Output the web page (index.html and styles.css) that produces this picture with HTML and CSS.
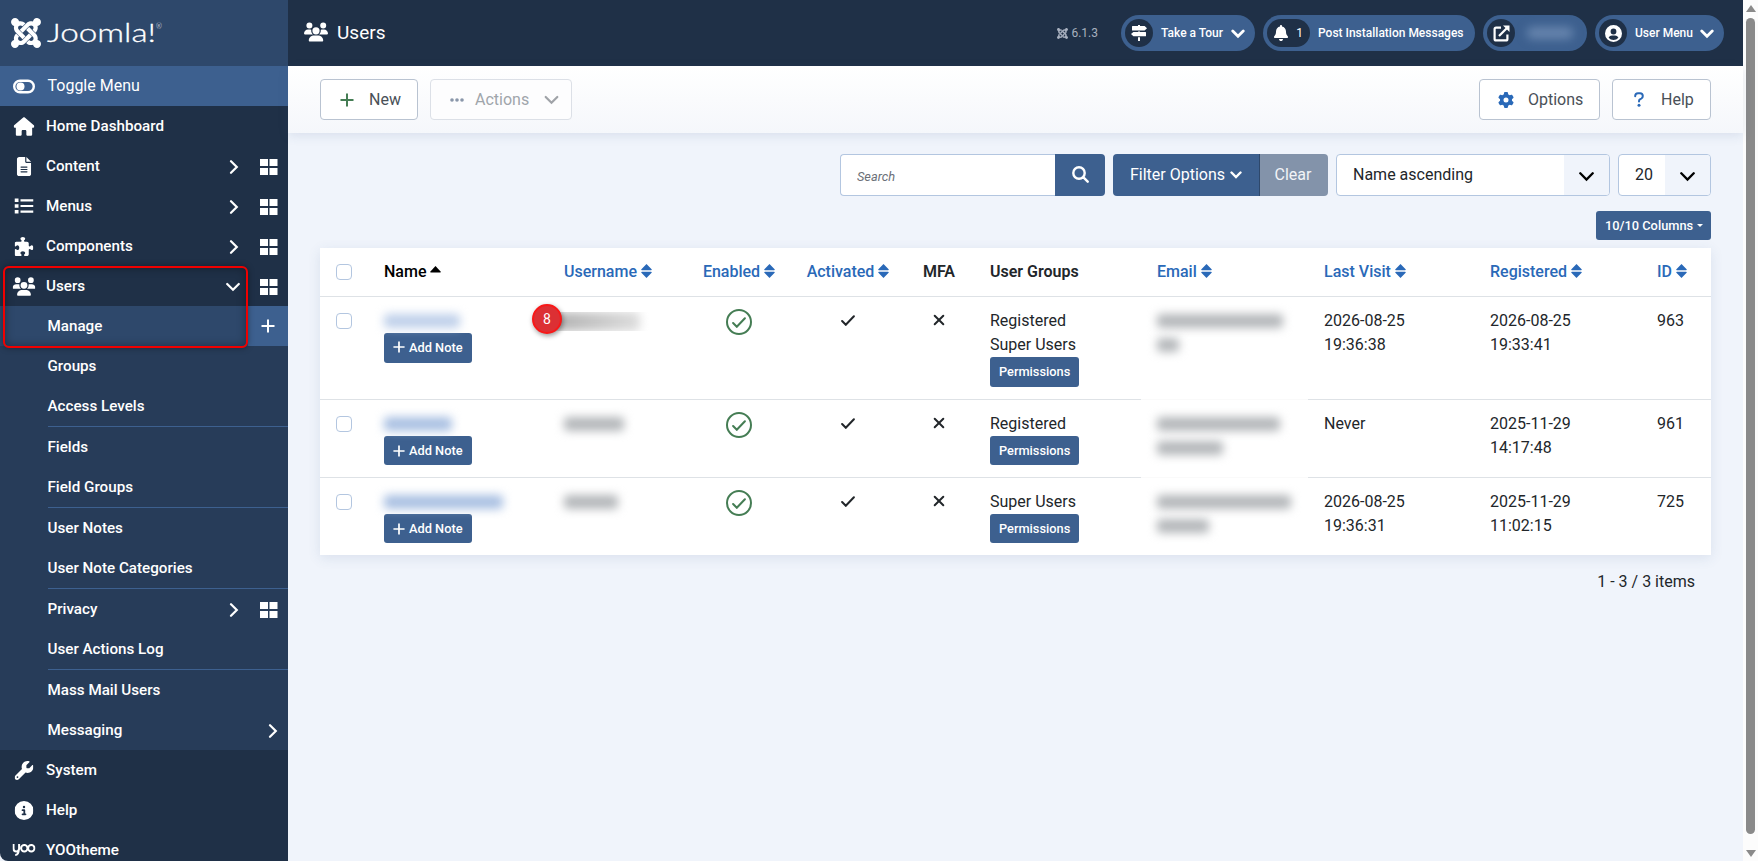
FILE: index.html
```html
<!DOCTYPE html>
<html lang="en">
<head>
  <meta charset="UTF-8">
  <title>Users</title>
  <link rel="stylesheet" href="styles.css">
</head>
<body>

  <!-- icons -->
  <svg width="0" height="0" class="sprite">
    <symbol id="joomla" viewBox="0 32 448 448"><path d="M.6 92.1C.6 58.8 27.4 32 60.4 32c30 0 54.5 21.9 59.2 50.2 32.6-7.6 67.1.6 96.5 30l-44.3 44.3c-20.5-20.5-42.6-16.3-55.4-3.5-14.3 14.3-14.3 37.9 0 52.2l99.5 99.5-44 44.3c-87.7-87.2-49.7-49.7-99.8-99.7-26.8-26.5-35-64.8-24.8-98.9C20.4 144.6.6 120.7.6 92.1zm129.5 116.4l44.3 44.3c10-10 89.7-89.7 99.7-99.8 14.3-14.3 37.6-14.3 51.9 0 12.8 12.8 17 35-3.5 55.4l44 44.3c31.2-31.2 38.5-67.6 28.9-101.2 29.2-4.1 51.9-29.2 51.9-59.5 0-33.2-26.8-60.1-59.8-60.1-30.3 0-55.4 22.5-59.5 51.6-33.8-9.9-71.7-1.5-98.3 25.1-18.3 19.1-71.1 71.5-99.6 99.9zm266.3 152.2c8.2-32.7-.9-68.5-26.3-93.9-11.8-12.2 5 4.7-99.5-99.7l-44.3 44.3 99.7 99.7c14.3 14.3 14.3 37.6 0 51.9-12.8 12.8-35 17-55.4-3.5l-44 44.3c27.6 30.2 68 38.8 102.7 28 5.5 27.4 29.7 48.1 58.9 48.1 33 0 59.8-26.8 59.8-60.1 0-30.2-22.5-55-51.6-59.1zm-84.3-53.1l-44-44.3c-87 86.4-50.4 50.4-99.7 99.8-14.3 14.3-37.6 14.3-51.9 0-13.1-13.4-16.9-35.3 3.2-55.4l-44-44.3c-30.2 30.2-38 65.2-29.5 98.3-26.7 6-46.2 29.9-46.2 58.2C0 453.2 26.8 480 59.8 480c28.6 0 52.5-19.8 58.6-46.7 32.7 8.2 68.5-.6 94.2-26 32.1-32 12.2-12.4 99.5-99.7z"/></symbol>
    <symbol id="home" viewBox="0 0 576 512"><path d="M575.8 255.5c0 18-15 32.1-32 32.1h-32l.7 160.2c0 2.7-.2 5.4-.5 8.1V472c0 22.1-17.9 40-40 40H392c-22.1 0-40-17.9-40-40v-88c0-17.7-14.3-32-32-32h-64c-17.7 0-32 14.3-32 32v88c0 22.1-17.9 40-40 40h-80c-22.1 0-40-17.9-40-40V287.6H32c-18 0-32-14-32-32.1 0-9 3-17 10-24L266.4 8c7-7 15-8 22-8s15 2 21 7l255.4 224.5c8 7 12 15 11 24z"/></symbol>
    <symbol id="file" viewBox="0 0 384 512"><path d="M64 0C28.7 0 0 28.7 0 64v384c0 35.3 28.7 64 64 64h256c35.3 0 64-28.7 64-64V160H256c-17.7 0-32-14.3-32-32V0H64zm192 0v128h128L256 0zM112 256h160c8.8 0 16 7.2 16 16s-7.2 16-16 16H112c-8.8 0-16-7.2-16-16s7.2-16 16-16zm0 64h160c8.8 0 16 7.2 16 16s-7.2 16-16 16H112c-8.8 0-16-7.2-16-16s7.2-16 16-16zm0 64h160c8.8 0 16 7.2 16 16s-7.2 16-16 16H112c-8.8 0-16-7.2-16-16s7.2-16 16-16z"/></symbol>
    <symbol id="list" viewBox="0 0 19 16"><path d="M0 .5h4v3.6H0zM0 6.2h4v3.6H0zM0 11.9h4v3.6H0zM6 1.2h13v2.2H6zM6 6.9h13v2.2H6zM6 12.6h13v2.2H6z"/></symbol>
    <symbol id="puzzle" viewBox="0 0 512 512"><path d="M192 104.8c0-9.2-5.8-17.3-13.2-22.8C167.2 73.3 160 61.3 160 48c0-26.5 28.7-48 64-48s64 21.5 64 48c0 13.3-7.2 25.3-18.8 34c-7.4 5.5-13.2 13.6-13.2 22.8c0 12.8 10.4 23.2 23.2 23.2H336c26.5 0 48 21.5 48 48v56.8c0 12.8 10.4 23.2 23.2 23.2c9.2 0 17.3-5.8 22.8-13.2c8.7-11.6 20.7-18.8 34-18.8c26.5 0 48 28.7 48 64s-21.5 64-48 64c-13.3 0-25.3-7.2-34-18.8c-5.5-7.4-13.6-13.2-22.8-13.2c-12.8 0-23.2 10.4-23.2 23.2V464c0 26.5-21.5 48-48 48H279.2c-12.8 0-23.2-10.4-23.2-23.2c0-9.2 5.8-17.3 13.2-22.8c11.6-8.7 18.8-20.7 18.8-34c0-26.5-28.7-48-64-48s-64 21.5-64 48c0 13.3 7.2 25.3 18.8 34c7.4 5.5 13.2 13.6 13.2 22.8c0 12.8-10.4 23.2-23.2 23.2H48c-26.5 0-48-21.5-48-48V343.2C0 330.4 10.4 320 23.2 320c9.2 0 17.3 5.8 22.8 13.2C54.7 344.8 66.7 352 80 352c26.5 0 48-28.7 48-64s-21.5-64-48-64c-13.3 0-25.3 7.2-34 18.8C40.5 250.2 32.4 256 23.2 256C10.4 256 0 245.6 0 232.8V176c0-26.5 21.5-48 48-48H168.8c12.8 0 23.2-10.4 23.2-23.2z"/></symbol>
    <symbol id="users" viewBox="0 0 640 512"><path d="M144 0a80 80 0 1 1 0 160A80 80 0 1 1 144 0zM512 0a80 80 0 1 1 0 160A80 80 0 1 1 512 0zM0 298.7C0 239.8 47.8 192 106.7 192h42.7c15.9 0 31 3.5 44.6 9.7c-1.3 7.2-1.9 14.7-1.9 22.3c0 38.2 16.8 72.5 43.3 96H21.3C9.6 320 0 310.4 0 298.7zM405.3 320h-.7c26.6-23.5 43.3-57.8 43.3-96c0-7.6-.7-15-1.9-22.3c13.6-6.3 28.7-9.7 44.6-9.7h42.7C592.2 192 640 239.8 640 298.7c0 11.8-9.6 21.3-21.3 21.3H405.3zM224 224a96 96 0 1 1 192 0 96 96 0 1 1-192 0zM128 485.3C128 411.7 187.7 352 261.3 352h117.4C452.3 352 512 411.7 512 485.3c0 14.7-11.9 26.7-26.7 26.7H154.7c-14.7 0-26.7-11.9-26.7-26.7z"/></symbol>
    <symbol id="wrench" viewBox="0 0 512 512"><path d="M352 320c88.4 0 160-71.6 160-160c0-15.3-2.2-30.1-6.2-44.2c-3.1-10.8-16.4-13.2-24.3-5.3l-76.8 76.8c-3 3-7.1 4.7-11.3 4.7H336c-8.8 0-16-7.2-16-16V118.6c0-4.2 1.7-8.3 4.7-11.3l76.8-76.8c7.9-7.9 5.4-21.2-5.3-24.3C382.1 2.2 367.3 0 352 0C263.6 0 192 71.6 192 160c0 19.1 3.4 37.5 9.5 54.5L19.9 396.1C7.2 408.8 0 426.1 0 444.1C0 481.6 30.4 512 67.9 512c18 0 35.3-7.2 48-19.9L297.5 310.5c17 6.2 35.4 9.5 54.5 9.5zM80 408a24 24 0 1 1 0 48 24 24 0 1 1 0-48z"/></symbol>
    <symbol id="info" viewBox="0 0 512 512"><path fill-rule="evenodd" d="M256 512A256 256 0 1 0 256 0a256 256 0 1 0 0 512zM216 336h24v-64h-24c-13.3 0-24-10.7-24-24s10.7-24 24-24h48c13.3 0 24 10.7 24 24v88h8c13.3 0 24 10.7 24 24s-10.7 24-24 24h-80c-13.3 0-24-10.7-24-24s10.7-24 24-24zm40-208a32 32 0 1 1 0 64 32 32 0 1 1 0-64z"/></symbol>
    <symbol id="yoo" viewBox="0 0 23 12"><path fill="none" stroke="currentColor" stroke-width="2" d="M1 0v4.5q0 3 2.8 3t2.8-3V0M6.3 5q0 6-3.6 6M15 4.3a3.2 3.2 0 1 0-6.4 0a3.2 3.2 0 1 0 6.4 0M22 4.3a3.2 3.2 0 1 0-6.4 0a3.2 3.2 0 1 0 6.4 0"/></symbol>
    <symbol id="toggle" viewBox="0 0 22 14"><rect x="1.2" y="1.2" width="19.6" height="11.6" rx="5.8" fill="none" stroke="currentColor" stroke-width="2.4"/><circle cx="7.5" cy="7" r="4"/></symbol>
    <symbol id="grid" viewBox="0 0 18 16"><path d="M0 0h8v7H0zM9.500 0h8v7h-8zM0 9h8v7H0zM9.500 9h8v7h-8z"/></symbol>
    <symbol id="right" viewBox="0 0 10 14"><path fill="none" stroke="currentColor" stroke-width="2.2" stroke-linecap="round" d="M2 1.2l5.8 5.8L2 12.8"/></symbol>
    <symbol id="down" viewBox="0 0 14 10"><path fill="none" stroke="currentColor" stroke-width="2.2" stroke-linecap="round" d="M1.2 2L7 7.8 12.8 2"/></symbol>
    <symbol id="bold-down" viewBox="0 0 12 8"><path fill="none" stroke="currentColor" stroke-width="2.4" stroke-linecap="round" d="M1.5 1.500L6 6l4.500-4.500"/></symbol>
    <symbol id="plus" viewBox="0 0 14 14"><path d="M6 .5h2V6h5.5v2H8v5.5H6V8H.5V6H6z"/></symbol>
    <symbol id="signs" viewBox="0 0 16 16"><path d="M7 0h2v1h4.600L16 3.300 13.600 5.600H1.500Q1 5.600 1 5.100V1.500Q1 1 1.500 1H7zM7 6.500h2v.5h5.500q.5 0 .5.5v3.200q0 .5-.5.5H2.400L0 9.100 2.400 7H7zM7 12.200h2V16H7z"/></symbol>
    <symbol id="bell" viewBox="0 0 448 512"><path d="M224 0c-17.7 0-32 14.3-32 32v19.2C119 66 64 130.6 64 208v18.8c0 47-17.3 92.4-48.5 127.6l-7.4 8.3c-8.4 9.4-10.4 22.9-5.3 34.4S19.4 416 32 416h384c12.6 0 24-7.4 29.2-18.9s3.1-25-5.3-34.4l-7.4-8.3C401.3 319.2 384 273.9 384 226.8V208c0-77.4-55-142-128-156.8V32c0-17.7-14.3-32-32-32zm45.3 493.3c12-12 18.7-28.3 18.7-45.3H160c0 17 6.7 33.3 18.7 45.3s28.3 18.7 45.3 18.7 33.3-6.7 45.3-18.7z"/></symbol>
    <symbol id="external" viewBox="0 0 17 17"><path fill="none" stroke="currentColor" stroke-width="2.2" d="M8 2.600H3.100q-1.500 0-1.500 1.500v9.800q0 1.500 1.500 1.500h9.800q1.500 0 1.500-1.500V9.500M6 11l8-8"/><path d="M10 .5h6.500V7z"/></symbol>
    <symbol id="user" viewBox="0 0 17 17"><path fill-rule="evenodd" d="M8.500 0a8.500 8.500 0 1 0 0 17 8.500 8.500 0 1 0 0-17zM8.500 3.600a2.900 2.900 0 1 1 0 5.800 2.900 2.900 0 1 1 0-5.800zM3.600 12.700q1-2.200 3.400-2.200h3q2.400 0 3.400 2.200a6.500 6.500 0 0 1-9.800 0z"/></symbol>
    <symbol id="gear" viewBox="0 0 512 512"><path d="M495.9 166.6c3.2 8.7 .5 18.4-6.4 24.6l-43.3 39.4c1.1 8.3 1.7 16.8 1.7 25.4s-.6 17.1-1.7 25.4l43.3 39.4c6.9 6.2 9.6 15.9 6.4 24.6c-4.4 11.9-9.7 23.3-15.8 34.3l-4.7 8.1c-6.6 11-14 21.4-22.1 31.2c-5.9 7.2-15.7 9.6-24.5 6.8l-55.7-17.7c-13.4 10.3-28.2 18.9-44 25.4l-12.5 57.1c-2 9.1-9 16.3-18.2 17.8c-13.8 2.3-28 3.5-42.5 3.5s-28.7-1.2-42.5-3.5c-9.2-1.5-16.2-8.7-18.2-17.8l-12.5-57.1c-15.8-6.5-30.6-15.1-44-25.4L83.1 425.9c-8.8 2.8-18.6 .3-24.5-6.8c-8.1-9.8-15.5-20.2-22.1-31.2l-4.7-8.1c-6.1-11-11.4-22.4-15.8-34.3c-3.2-8.7-.5-18.4 6.4-24.6l43.3-39.4C64.6 273.1 64 264.6 64 256s.6-17.1 1.7-25.4L22.4 191.2c-6.9-6.2-9.6-15.9-6.4-24.6c4.4-11.9 9.7-23.3 15.8-34.3l4.7-8.1c6.6-11 14-21.4 22.1-31.2c5.9-7.2 15.7-9.6 24.5-6.8l55.7 17.7c13.4-10.3 28.2-18.9 44-25.4l12.5-57.1c2-9.1 9-16.3 18.2-17.8C227.3 1.2 241.5 0 256 0s28.7 1.2 42.5 3.5c9.2 1.5 16.2 8.7 18.2 17.8l12.5 57.1c15.8 6.5 30.6 15.1 44 25.4l55.7-17.7c8.8-2.8 18.6-.3 24.5 6.8c8.1 9.8 15.5 20.2 22.1 31.2l4.7 8.1c6.1 11 11.4 22.4 15.8 34.3zM256 336a80 80 0 1 0 0-160 80 80 0 1 0 0 160z"/></symbol>
    <symbol id="question" viewBox="0 0 10 15"><path fill="none" stroke="currentColor" stroke-width="2" stroke-linecap="round" d="M1.200 4.300V4Q1.200 1.200 4 1.200h2Q8.800 1.200 8.800 4q0 1.600-1.400 2.500L5.600 7.600Q5 8 5 9.500"/><circle cx="5" cy="13.300" r="1.500"/></symbol>
    <symbol id="dots" viewBox="0 0 14 4"><circle cx="2" cy="2" r="1.800"/><circle cx="7" cy="2" r="1.800"/><circle cx="12" cy="2" r="1.800"/></symbol>
    <symbol id="search" viewBox="0 0 17 17"><path fill="none" stroke="currentColor" stroke-width="2.4" stroke-linecap="round" d="M1.300 7a5.700 5.700 0 1 0 11.400 0a5.700 5.700 0 1 0-11.400 0M11.200 11.200l4.500 4.500"/></symbol>
    <symbol id="sort" viewBox="0 0 11 14"><path d="M5.500 0L10.600 5.300q.6.900-.5.900H.9q-1.100 0-.5-.9zM5.500 14L.4 8.700q-.6-.9.500-.9h9.200q1.100 0 .5.900z"/></symbol>
    <symbol id="up" viewBox="0 0 11 7"><path d="M5.500 0l5.300 5.700q.3.800-.7.800H.9q-1 0-.7-.8z"/></symbol>
    <symbol id="tick" viewBox="0 0 14 11"><path fill="none" stroke="currentColor" stroke-width="2" stroke-linecap="round" d="M1.100 6l3.700 3.800L12.900 1.200"/></symbol>
    <symbol id="cross" viewBox="0 0 12 12"><path fill="none" stroke="currentColor" stroke-width="2" stroke-linecap="round" d="M1.700 1.700l8.600 8.600M10.300 1.700l-8.600 8.600"/></symbol>
  </svg>

  <div class="page">
    <aside class="sidebar">
      <div class="brand">
        <svg class="brand-mark"><use href="#joomla"/></svg>
        <svg class="brand-name" width="120" height="30"><text x="1" y="24" textLength="109" lengthAdjust="spacingAndGlyphs">Joomla!</text><text class="reg" x="110" y="11">®</text></svg>
      </div>
      <a class="item toggle"><svg class="ico" style="width:22px;height:15px"><use href="#toggle"/></svg><span>Toggle Menu</span></a>
      <a class="item"><svg class="ico" style="width:21px;height:19px"><use href="#home"/></svg><span>Home Dashboard</span></a>
      <a class="item"><svg class="ico" style="width:15px;height:19px"><use href="#file"/></svg><span>Content</span><svg class="arrow"><use href="#right"/></svg><svg class="dash"><use href="#grid"/></svg></a>
      <a class="item"><svg class="ico" style="width:19px;height:16px"><use href="#list"/></svg><span>Menus</span><svg class="arrow"><use href="#right"/></svg><svg class="dash"><use href="#grid"/></svg></a>
      <a class="item"><svg class="ico" style="width:19px;height:19px"><use href="#puzzle"/></svg><span>Components</span><svg class="arrow"><use href="#right"/></svg><svg class="dash"><use href="#grid"/></svg></a>
      <a class="item"><svg class="ico" style="width:23px;height:19px"><use href="#users"/></svg><span>Users</span><svg class="arrow open"><use href="#down"/></svg><svg class="dash"><use href="#grid"/></svg></a>
      <div class="submenu">
        <a class="item active"><span>Manage</span><b class="add"><svg><use href="#plus"/></svg></b></a>
        <a class="item"><span>Groups</span></a>
        <a class="item"><span>Access Levels</span></a>
        <hr>
        <a class="item"><span>Fields</span></a>
        <a class="item"><span>Field Groups</span></a>
        <hr>
        <a class="item"><span>User Notes</span></a>
        <a class="item"><span>User Note Categories</span></a>
        <hr>
        <a class="item"><span>Privacy</span><svg class="arrow"><use href="#right"/></svg><svg class="dash"><use href="#grid"/></svg></a>
        <a class="item"><span>User Actions Log</span></a>
        <hr>
        <a class="item"><span>Mass Mail Users</span></a>
        <a class="item"><span>Messaging</span><svg class="arrow last"><use href="#right"/></svg></a>
      </div>
      <a class="item"><svg class="ico" style="width:19px;height:19px"><use href="#wrench"/></svg><span>System</span></a>
      <a class="item"><svg class="ico" style="width:19px;height:19px"><use href="#info"/></svg><span>Help</span></a>
      <a class="item"><svg class="ico" style="width:23px;height:12px"><use href="#yoo"/></svg><span>YOOtheme</span></a>
      <div class="highlight"></div>
    </aside>

    <div class="main">
      <header class="header">
        <svg class="title-icon"><use href="#users"/></svg>
        <h1>Users</h1>
        <div class="version"><svg><use href="#joomla"/></svg>6.1.3</div>
        <a class="pill tour"><i><svg width="16" height="16"><use href="#signs"/></svg></i><span>Take a Tour</span><svg class="caret"><use href="#bold-down"/></svg></a>
        <a class="pill messages"><i><svg width="14" height="16"><use href="#bell"/></svg><em>1</em></i><span>Post Installation Messages</span></a>
        <a class="pill site"><i><svg width="17" height="17"><use href="#external"/></svg></i><span class="smudge"></span></a>
        <a class="pill account"><i><svg width="17" height="17"><use href="#user"/></svg></i><span>User Menu</span><svg class="caret"><use href="#bold-down"/></svg></a>
      </header>

      <div class="toolbar">
        <button class="tool new"><svg width="14" height="14"><use href="#plus"/></svg>New</button>
        <button class="tool actions" disabled><svg width="14" height="4"><use href="#dots"/></svg>Actions<svg class="caret"><use href="#down"/></svg></button>
        <button class="tool options"><svg width="16" height="16"><use href="#gear"/></svg>Options</button>
        <button class="tool help"><svg width="10" height="15"><use href="#question"/></svg>Help</button>
      </div>

      <div class="content">
        <div class="filters">
          <div class="search"><input type="text" placeholder="Search"><button><svg><use href="#search"/></svg></button></div>
          <div class="filter-group"><button class="filter">Filter Options<svg><use href="#bold-down"/></svg></button><button class="clear">Clear</button></div>
          <div class="select order"><span>Name ascending</span><i><svg><use href="#down"/></svg></i></div>
          <div class="select limit"><span>20</span><i><svg><use href="#down"/></svg></i></div>
        </div>
        <button class="columns">10/10 Columns<u></u></button>

        <table>
          <colgroup><col style="width:48px"><col style="width:180px"><col style="width:139px"><col style="width:104px"><col style="width:114px"><col style="width:69px"><col style="width:167px"><col style="width:167px"><col style="width:166px"><col style="width:167px"><col style="width:70px"></colgroup>
          <thead>
            <tr>
              <th><b class="box"></b></th>
              <th class="sorted">Name<svg class="asc"><use href="#up"/></svg></th>
              <th class="link">Username<svg><use href="#sort"/></svg></th>
              <th class="link mid">Enabled<svg><use href="#sort"/></svg></th>
              <th class="link mid">Activated<svg><use href="#sort"/></svg></th>
              <th class="mid plain">MFA</th>
              <th class="plain">User Groups</th>
              <th class="link">Email<svg><use href="#sort"/></svg></th>
              <th class="link">Last Visit<svg><use href="#sort"/></svg></th>
              <th class="link">Registered<svg><use href="#sort"/></svg></th>
              <th class="link">ID<svg><use href="#sort"/></svg></th>
            </tr>
          </thead>
          <tbody>
            <tr class="r1">
              <td><b class="box"></b></td>
              <td><div class="mask name"><s style="width:76px"></s></div><button class="btn"><svg><use href="#plus"/></svg>Add Note</button></td>
              <td><div class="mask dark"><s style="width:88px"></s></div><div class="step">8</div></td>
              <td class="mid"><b class="state"><svg><use href="#tick"/></svg></b></td>
              <td class="mid"><svg class="tick"><use href="#tick"/></svg></td>
              <td class="mid"><svg class="cross"><use href="#cross"/></svg></td>
              <td>Registered<br>Super Users<br><button class="btn">Permissions</button></td>
              <td class="email"><div class="mask mail"><s style="width:126px"></s><s style="width:22px"></s></div></td>
              <td>2026-08-25<br>19:36:38</td>
              <td>2026-08-25<br>19:33:41</td>
              <td>963</td>
            </tr>
            <tr class="r2">
              <td><b class="box"></b></td>
              <td><div class="mask name"><s style="width:68px"></s></div><button class="btn"><svg><use href="#plus"/></svg>Add Note</button></td>
              <td><div class="mask dark"><s style="width:60px"></s></div></td>
              <td class="mid"><b class="state"><svg><use href="#tick"/></svg></b></td>
              <td class="mid"><svg class="tick"><use href="#tick"/></svg></td>
              <td class="mid"><svg class="cross"><use href="#cross"/></svg></td>
              <td>Registered<br><button class="btn">Permissions</button></td>
              <td class="email"><div class="mask mail"><s style="width:123px"></s><s style="width:66px"></s></div></td>
              <td>Never</td>
              <td>2025-11-29<br>14:17:48</td>
              <td>961</td>
            </tr>
            <tr class="r3">
              <td><b class="box"></b></td>
              <td><div class="mask name"><s style="width:119px"></s></div><button class="btn"><svg><use href="#plus"/></svg>Add Note</button></td>
              <td><div class="mask dark"><s style="width:54px"></s></div></td>
              <td class="mid"><b class="state"><svg><use href="#tick"/></svg></b></td>
              <td class="mid"><svg class="tick"><use href="#tick"/></svg></td>
              <td class="mid"><svg class="cross"><use href="#cross"/></svg></td>
              <td>Super Users<br><button class="btn">Permissions</button></td>
              <td class="email"><div class="mask mail"><s style="width:134px"></s><s style="width:52px"></s></div></td>
              <td>2026-08-25<br>19:36:31</td>
              <td>2025-11-29<br>11:02:15</td>
              <td>725</td>
            </tr>
          </tbody>
        </table>
        <div class="count">1 - 3 / 3 items</div>
      </div>
    </div>

    <div class="scrollbar"><i class="sb-up"></i><i class="thumb"></i><i class="sb-down"></i></div>
  </div>

</body>
</html>
```
FILE: styles.css
```css
* {
  box-sizing: border-box;
}
body {
  margin: 0;
  font-family: Roboto, "Liberation Sans", sans-serif;
  font-size: 16px;
  line-height: 24px;
  color: #22262a;
  background: #f0f4fb;
  overflow: hidden;
}
button, input {
  font-family: inherit;
  font-size: 16px;
}
i, em {
  font-style: normal;
}
svg {
  fill: currentColor;
  flex: none;
}
.sprite {
  position: absolute;
}
.page {
  display: flex;
  height: 861px;
  overflow: hidden;
}

/* sidebar */
.sidebar {
  position: relative;
  width: 288px;
  flex: none;
  background: #1f3047;
  color: #fff;
  overflow: hidden;
  border-bottom-left-radius: 8px;
}
.brand {
  display: flex;
  height: 66px;
  padding: 18px 0 0 11px;
  background: #2e486b;
}
.brand-mark {
  width: 30px;
  height: 30px;
}
.brand-name {
  margin-left: 5px;
  font-family: Lato, sans-serif;
  font-weight: 300;
  font-size: 25px;
  stroke: #fff;
  stroke-width: .3px;
}
.brand-name .reg {
  font-size: 7px;
  stroke: none;
}
.item {
  display: flex;
  align-items: center;
  height: 40px;
  padding-left: 46px;
  position: relative;
  font-size: 15.2px;
  font-weight: 500;
}
.item .ico {
  margin-left: -46px;
  position: relative;
  left: 23.5px;
  transform: translateX(-50%);
}
.item .ico + span {
  position: absolute;
  left: 46px;
}
.item.toggle {
  background: #3d608f;
  font-size: 16px;
  font-weight: 400;
}
.item.toggle .ico {
  left: 24px;
}
.item.toggle .ico + span {
  left: 47.5px;
}
.arrow {
  width: 10px;
  height: 14px;
  margin: 1px 21px 0 auto;
}
.arrow.open {
  width: 14px;
  height: 10px;
  margin-right: 20px;
}
.arrow.last {
  margin-right: 10px;
}
.dash {
  width: 18px;
  height: 16px;
  margin: 2px 10px 0 0;
}
.submenu {
  background: #273c59;
}
.submenu .item {
  padding-left: 47.5px;
}
.submenu hr {
  margin: 0 0 0 48px;
  border: 0;
  height: 1px;
  background: #3d608f;
}
.submenu .active {
  background: #2e486b;
}
.add {
  display: flex;
  align-items: center;
  justify-content: center;
  width: 40px;
  height: 40px;
  margin-left: auto;
  padding-bottom: 1px;
  background: #3d608f;
}
.add svg {
  width: 14px;
  height: 14px;
}
.highlight {
  position: absolute;
  left: 3px;
  top: 266px;
  width: 245px;
  height: 82px;
  border: 2px solid #f00000;
  border-radius: 6px;
  box-shadow: 0 0 6px rgba(0, 0, 0, .35), inset 0 0 10px rgba(0, 0, 0, .35);
}

/* header */
.main {
  flex: 1;
  min-width: 0;
}
.header {
  display: flex;
  align-items: center;
  height: 66px;
  padding: 0 19px 0 16px;
  background: #1f3047;
  color: #fff;
}
.title-icon {
  width: 24px;
  height: 20px;
  margin-top: -2px;
}
h1 {
  margin: 0 auto 0 9px;
  font-size: 19px;
  font-weight: 400;
}
.version {
  display: flex;
  align-items: center;
  margin-right: 23px;
  font-size: 12px;
  color: #a8b0bf;
}
.version svg {
  width: 11px;
  height: 11px;
  margin-right: 3px;
}
.pill {
  display: flex;
  align-items: center;
  height: 36px;
  margin-left: 8px;
  padding-left: 4px;
  border-radius: 18px;
  background: #3d608f;
  font-size: 12px;
  font-weight: 500;
  white-space: nowrap;
}
.version + .pill {
  margin-left: 0;
}
.pill i {
  display: flex;
  align-items: center;
  justify-content: center;
  min-width: 28px;
  height: 28px;
  border-radius: 14px;
  background: #1f3047;
}
.pill span {
  margin-left: 8px;
}
.pill em {
  margin-left: 8px;
  font-weight: 400;
}
.caret {
  width: 14px;
  height: 10px;
}
.pill .caret {
  margin: 1px 10px 0 auto;
}
.tour {
  width: 134px;
}
.messages {
  width: 212px;
}
.messages i {
  width: 43px;
}
.site {
  width: 104px;
}
.account {
  width: 129px;
}
.pill .smudge {
  width: 46px;
  height: 12px;
  margin-left: 12px;
  background: #6785ae;
  border-radius: 5px;
  filter: blur(5px);
}

/* toolbar */
.toolbar {
  position: relative;
  display: flex;
  gap: 12px;
  height: 67px;
  padding: 13px 32px 0;
  background: linear-gradient(#fff, #f5f7fb);
  box-shadow: 0 3px 10px rgba(60, 90, 140, .12);
}
.tool {
  display: flex;
  align-items: center;
  height: 41px;
  padding: 0;
  border: 1px solid #b9c3d1;
  border-radius: 4px;
  background: #fff;
  color: #495057;
}
.new {
  width: 98px;
}
.new svg {
  margin: 0 15px 0 19px;
  color: #457d54;
}
.actions {
  width: 142px;
  border-color: #dce0e7;
  color: #a0a5ab;
  background: #fdfdfe;
}
.actions svg {
  margin: 0 11px 0 19px;
  color: #8a97aa;
}
.actions .caret {
  width: 15px;
  margin: 0 0 0 15px;
  color: #a0a3a8;
}
.options {
  width: 121px;
  margin-left: auto;
}
.options svg {
  margin: 0 14px 0 18px;
  color: #2a69b8;
}
.help {
  width: 99px;
}
.help svg {
  margin: 0 17px 0 21px;
  color: #2a69b8;
}

/* filters */
.content {
  padding: 21px 32px 0;
}
.filters {
  display: flex;
  justify-content: flex-end;
  gap: 8px;
  height: 42px;
}
.search {
  display: flex;
  width: 265px;
}
.search input {
  width: 215px;
  padding: 0 0 0 16px;
  border: 1px solid #b3c6e0;
  border-right: 0;
  border-radius: 4px 0 0 4px;
  background: #fff;
}
.search input::placeholder {
  font-size: 12.8px;
  font-style: italic;
  color: #6b7078;
}
.search button {
  width: 50px;
  padding: 0;
  border: 0;
  border-radius: 0 4px 4px 0;
  background: #3d608f;
  color: #fff;
}
.search button svg {
  width: 17px;
  height: 17px;
  margin-top: -3px;
  vertical-align: middle;
}
.filter-group {
  display: flex;
}
.filter {
  width: 147px;
  padding: 0 0 2px;
  border: 0;
  border-right: 1px solid #2e486b;
  border-radius: 4px 0 0 4px;
  background: #3d608f;
  color: #fff;
}
.filter svg {
  width: 12px;
  height: 8px;
  margin-left: 5px;
  vertical-align: 1px;
}
.clear {
  width: 68px;
  padding: 0 2px 2px 0;
  border: 0;
  border-radius: 0 4px 4px 0;
  background: #8393aa;
  color: #f2f4f7;
}
.select {
  display: flex;
  justify-content: space-between;
  border: 1px solid #b3c6e0;
  border-radius: 4px;
  background: #fff;
  line-height: 39px;
  overflow: hidden;
}
.select span {
  padding-left: 16px;
}
.select i {
  display: flex;
  align-items: center;
  justify-content: center;
  width: 45px;
  background: #f0f4fb;
  color: #000;
}
.select svg {
  width: 15px;
  height: 11px;
  margin-top: 2px;
}
.order {
  width: 274px;
}
.limit {
  width: 93px;
}
.columns {
  display: flex;
  align-items: center;
  width: 115px;
  height: 29px;
  margin: 15px 0 8px auto;
  padding: 0 0 0 9px;
  border: 0;
  border-radius: 3px;
  background: #3d608f;
  color: #fff;
  font-size: 12.8px;
  font-weight: 500;
  white-space: nowrap;
}
.columns u {
  margin-left: 4px;
  border: 3px solid transparent;
  border-top-color: #fff;
  border-bottom: 0;
}

/* user list */
table {
  width: 1391px;
  table-layout: fixed;
  border-collapse: separate;
  border-spacing: 0;
  background: #fff;
  box-shadow: 0 3px 12px rgba(60, 90, 140, .12);
}
th, td {
  position: relative;
  padding: 12px 0 0 16px;
  text-align: left;
  vertical-align: top;
  border-bottom: 1px solid #dee2e6;
}
th {
  height: 49px;
  font-weight: 500;
  white-space: nowrap;
}
th.sorted {
  color: #000;
}
th.plain {
  font-weight: 600;
}
th.link {
  color: #2a69b8;
}
th svg {
  width: 11px;
  height: 14px;
  margin-left: 4px;
  vertical-align: -1px;
}
th .asc {
  height: 7px;
  vertical-align: 4px;
}
.mid {
  padding-left: 0;
  padding-right: 1px;
  text-align: center;
}
th.link.mid {
  padding-right: 0;
}
.r1 td {
  height: 103px;
}
.r2 td {
  height: 78px;
}
.r3 td {
  height: 77px;
  border-bottom: 0;
}
td.email {
  border-color: #fafafa;
}
.box {
  display: block;
  width: 16px;
  height: 16px;
  margin-top: 4px;
  border: 1px solid #b3c6e0;
  border-radius: 4px;
  background: #fff;
}
.btn {
  display: flex;
  align-items: center;
  height: 29px;
  padding: 0 9px;
  border: 0;
  border-radius: 3px;
  background: #3d608f;
  color: #fff;
  font-size: 12.8px;
  font-weight: 500;
}
.r1 .btn {
  height: 30px;
  padding-bottom: 2px;
}
.btn svg {
  width: 12px;
  height: 12px;
  margin-right: 4px;
}
.state {
  display: flex;
  align-items: center;
  justify-content: center;
  width: 26px;
  height: 26px;
  margin: 0 auto;
  position: relative;
  left: .5px;
  border: 2px solid #457d54;
  border-radius: 50%;
  color: #457d54;
}
.state svg {
  width: 14px;
  height: 11px;
}
.tick {
  width: 14px;
  height: 11px;
}
.cross {
  width: 12px;
  height: 12px;
}

/* hidden personal data */
.mask {
  height: 24px;
  padding-top: 5px;
}
.mask s {
  display: block;
  height: 14px;
  margin-bottom: 10px;
  border-radius: 4px;
  background: #b4b7ba;
  filter: blur(5px);
}
.mask.name s {
  background: #a9c0e2;
}
.r1 .mask.name s {
  background: #bfd0ea;
}
.r1 .mask.dark {
  height: 19px;
  margin: 3px 0 0 -16px;
  padding: 0;
  overflow: hidden;
}
.r1 .mask.dark s {
  height: 19px;
  margin-left: 4px;
  background: linear-gradient(90deg, #b0b0b0, #dedede);
}
.step {
  position: absolute;
  left: -16px;
  top: 7px;
  width: 30px;
  height: 30px;
  border: 2px solid #f81818;
  border-radius: 50%;
  background: #dc3034;
  color: #fff;
  font-size: 14px;
  line-height: 26px;
  text-align: center;
  box-shadow: 1px 2px 5px rgba(0, 0, 0, .4);
}
.count {
  padding: 15px 16px 0;
  text-align: right;
}

/* scrollbar */
.scrollbar {
  display: flex;
  flex-direction: column;
  align-items: center;
  width: 15px;
  padding: 5px 0 4px;
  background: #fcfcfc;
}
.sb-up, .sb-down {
  border: 5px solid transparent;
}
.sb-up {
  border-top: 0;
  border-bottom: 7px solid #8a8a8a;
}
.sb-down {
  border-bottom: 0;
  border-top: 7px solid #8a8a8a;
}
.thumb {
  width: 9px;
  height: 816px;
  margin: 6px 0 16px;
  border-radius: 5px;
  background: #8a8a8a;
}
```
